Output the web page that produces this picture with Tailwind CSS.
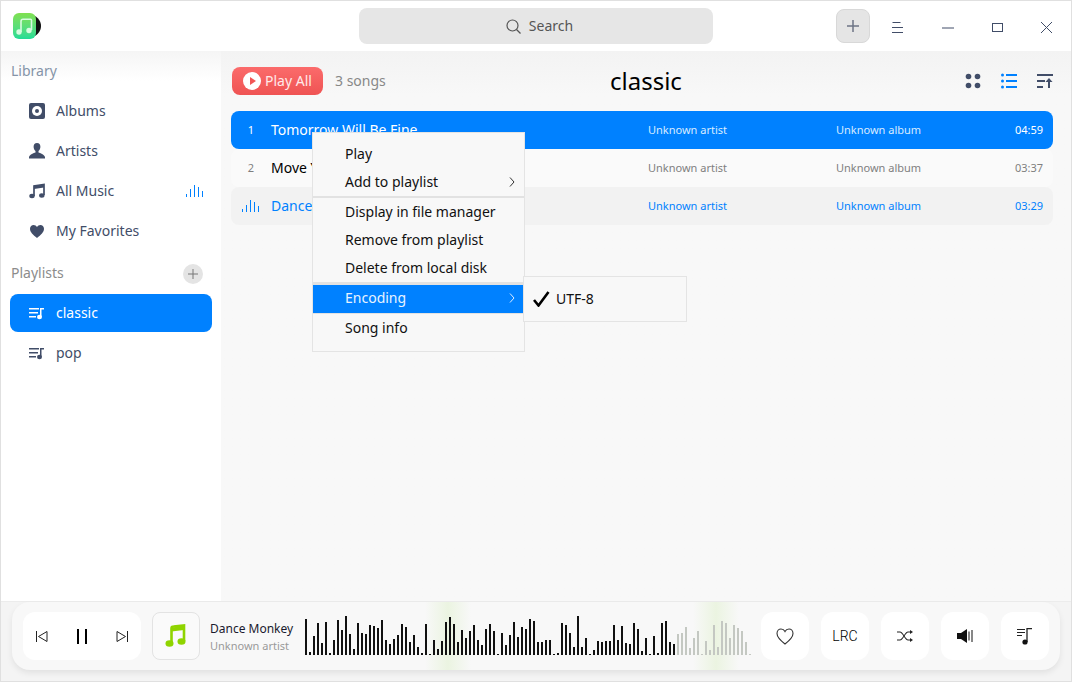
<!DOCTYPE html>
<html lang="en">
  <head>
    <meta charset="UTF-8" />
    <title>Music</title>
    <script src="https://cdn.jsdelivr.net/npm/@tailwindcss/browser@4"></script>
  </head>
  <body class="w-[1072px] h-[682px] overflow-hidden bg-white font-['Noto_Sans',sans-serif]">
    <div class="relative w-full h-full border border-[#e0e0e0] flex flex-col bg-[#f8f8f8]">
      <!-- title bar -->
      <header class="h-[50px] shrink-0 bg-white flex items-center relative z-10">
        <div class="ml-3 relative w-7 h-[26px]">
          <div class="absolute left-[12px] top-[2px] w-[16px] h-[22px] rounded-r-full bg-[#111]"></div>
          <div class="absolute left-0 top-0 w-[23px] h-[26px] rounded-[6px] bg-gradient-to-b from-[#7fe04f] to-[#1fdc96] flex items-center justify-center">
            <svg class="w-[17px] h-[17px]" viewBox="0 0 17 17" fill="none"><path d="M5 14V3.500C5 2 5.700 1.300 7 1.300h7.500c.7 0 1 .4 1 1V12" stroke="#d8fbe0" stroke-width="1.600"/><circle cx="3" cy="14" r="2.700" fill="#d8fbe0"/><circle cx="13" cy="12.500" r="2.700" fill="#d8fbe0"/></svg>
          </div>
        </div>
        <div class="absolute left-[358px] top-[7px] w-[354px] h-9 rounded-lg bg-[#e6e6e6] flex items-center justify-center gap-[7px] pl-[6px] text-sm text-[#555]">
          <svg class="w-[17px] h-[17px]" viewBox="0 0 17 17" fill="none" stroke="#555" stroke-width="1.200"><circle cx="7.500" cy="7.500" r="5.500"/><path d="M11.500 11.500l4 4"/></svg>
          <span>Search</span>
        </div>
        <div class="absolute left-[835px] top-[8px] w-[34px] h-[34px] rounded-lg bg-[#e5e5e5] border border-[#d8d8d8] flex items-center justify-center">
          <svg class="w-[14px] h-[14px]" viewBox="0 0 14 14" stroke="#6d7485" stroke-width="1.500"><path d="M7 1v12M1 7h12"/></svg>
        </div>
        <svg class="absolute left-[890px] top-[20px] w-[12px] h-[13px]" viewBox="0 0 12 13" stroke="#414d68"><path d="M1.500 1.500h8M1 6.500h11M1 11.500h11"/></svg>
        <svg class="absolute left-[941px] top-[26px] w-[12px] h-[2px]" viewBox="0 0 12 2" stroke="#414d68"><path d="M0 1h12"/></svg>
        <svg class="absolute left-[991px] top-[22px] w-[12px] h-[10px]" viewBox="0 0 12 10" fill="none" stroke="#414d68"><rect x=".5" y=".5" width="10" height="8"/></svg>
        <svg class="absolute left-[1039px] top-[20px] w-[13px] h-[13px]" viewBox="0 0 13 13" stroke="#414d68"><path d="M1 1l11 11M12 1L1 12"/></svg>
      </header>

      <div class="flex-1 flex min-h-0">
        <!-- sidebar -->
        <aside class="w-[220px] shrink-0 bg-white relative">
          <div class="absolute inset-x-0 top-0 h-[30px] bg-gradient-to-b from-[#f5f5f5] to-white"></div>
          <div class="relative">
            <div class="pl-[10px] pt-[10px] h-[40px] text-sm text-[#8594a8]">Library</div>
            <div class="h-10 flex items-center pl-[28px] gap-[11px] text-sm text-[#414d68]">
              <svg class="w-4 h-4" viewBox="0 0 16 16"><rect width="16" height="16" rx="2" fill="#414d68"/><circle cx="8" cy="8" r="5" fill="#fff"/><circle cx="8" cy="8" r="2" fill="#414d68"/></svg>
              <span>Albums</span>
            </div>
            <div class="h-10 flex items-center pl-[28px] gap-[11px] text-sm text-[#414d68]">
              <svg class="w-4 h-4" viewBox="0 0 16 16" fill="#414d68"><path d="M8 0c2.300 0 3.400 1.700 3.400 3.800 0 1.700-.8 3.300-1.900 4.200v1.500c1.800.7 5.500 1.800 6.500 4.500v1.500H0V14c1-2.700 4.700-3.800 6.500-4.500V8C5.400 7.100 4.600 5.500 4.600 3.800 4.600 1.700 5.700 0 8 0z"/></svg>
              <span>Artists</span>
            </div>
            <div class="relative h-10 flex items-center pl-[28px] gap-[11px] text-sm text-[#414d68]">
              <svg class="w-4 h-4" viewBox="0 0 16 16" fill="none"><path d="M5 13V3l10-1.500V12" stroke="#414d68" stroke-width="1.700"/><path d="M5 3l10-1.500v3L5 6z" fill="#414d68"/><ellipse cx="3" cy="13" rx="2.700" ry="2.200" fill="#414d68"/><ellipse cx="12.800" cy="12.500" rx="2.700" ry="2.200" fill="#414d68"/></svg>
              <span>All Music</span>
              <svg class="absolute left-[185px] top-[14px] w-[17px] h-[12px]" viewBox="0 0 17 12" fill="#0081ff" shape-rendering="crispEdges"><rect x="0" y="9" width="1" height="3"/><rect x="4" y="4" width="1" height="8"/><rect x="8" y="0" width="1" height="12"/><rect x="12" y="2" width="1" height="10"/><rect x="16" y="6" width="1" height="6"/></svg>
            </div>
            <div class="h-10 flex items-center pl-[28px] gap-[11px] text-sm text-[#414d68]">
              <svg class="w-4 h-4" viewBox="0 0 16 16" fill="#414d68"><path d="M8 15C4 11.800 1 9.200 1 5.800 1 3.500 2.700 2 4.600 2 6 2 7.300 2.800 8 4c.7-1.200 2-2 3.400-2C13.300 2 15 3.500 15 5.800c0 3.400-3 6-7 9.200z"/></svg>
              <span>My Favorites</span>
            </div>
            <div class="h-[43px] pl-[10px] pr-[18px] pt-[2px] flex items-center justify-between text-sm text-[#8c8c8c]">
              <span class="mb-[2px]">Playlists</span>
              <span class="w-5 h-5 rounded-full bg-[#e4e4e4] flex items-center justify-center">
                <svg class="w-[10px] h-[10px]" viewBox="0 0 10 10" stroke="#777"><path d="M5 0v10M0 5h10"/></svg>
              </span>
            </div>
            <div class="ml-[9px] w-[202px] h-[38px] rounded-lg bg-[#0081ff] flex items-center pl-[19px] gap-[11px] text-sm text-white">
              <svg class="w-4 h-[14px]" viewBox="0 0 16 14" fill="#fff"><path d="M0 2h10v1.500H0zM0 6h9v1.500H0zM0 10h7v1.500H0z"/><path d="M11 2h4v1.500h-2.500V11H11z"/><ellipse cx="10.500" cy="11" rx="2.500" ry="2.200"/></svg>
              <span>classic</span>
            </div>
            <div class="ml-[9px] w-[202px] h-[42px] flex items-center pl-[19px] gap-[11px] text-sm text-[#414d68]">
              <svg class="w-4 h-[14px]" viewBox="0 0 16 14" fill="#414d68"><path d="M0 2h10v1.500H0zM0 6h9v1.500H0zM0 10h7v1.500H0z"/><path d="M11 2h4v1.500h-2.500V11H11z"/><ellipse cx="10.500" cy="11" rx="2.500" ry="2.200"/></svg>
              <span>pop</span>
            </div>
          </div>
        </aside>

        <!-- main -->
        <main class="flex-1 min-w-0 relative bg-gradient-to-b from-[#f3f3f3] to-[#f8f8f8] to-[8%] pl-[10px] pr-[18px]">
          <div class="relative h-[60px] flex items-center">
            <div class="ml-px w-[91px] h-[28px] rounded-lg bg-gradient-to-b from-[#fb6b6b] to-[#ef5353] flex items-center pl-[11px] gap-[4px] text-sm text-[#ffe9e9]">
              <svg class="w-[18px] h-[18px]" viewBox="0 0 18 18"><circle cx="9" cy="9" r="9" fill="#fff"/><path d="M7 5l6 4-6 4z" fill="#f25656"/></svg>
              <span>Play All</span>
            </div>
            <span class="ml-[12px] text-sm text-[#888]">3 songs</span>
            <span class="absolute left-[379px] top-[13px] text-2xl leading-[34px] text-black">classic</span>
            <div class="absolute right-0 top-[22px] flex items-center gap-[20px]">
              <svg class="w-4 h-4" viewBox="0 0 16 16" fill="#414d68"><circle cx="3.500" cy="3.500" r="2.800"/><circle cx="12.500" cy="3.500" r="2.800"/><circle cx="3.500" cy="12.500" r="2.800"/><circle cx="12.500" cy="12.500" r="2.800"/></svg>
              <svg class="w-4 h-4" viewBox="0 0 16 16" fill="#0081ff"><circle cx="1.500" cy="2" r="1.500"/><circle cx="1.500" cy="8" r="1.500"/><circle cx="1.500" cy="14" r="1.500"/><rect x="5" y="1" width="11" height="2"/><rect x="5" y="7" width="11" height="2"/><rect x="5" y="13" width="11" height="2"/></svg>
              <svg class="w-4 h-4" viewBox="0 0 16 16" fill="#414d68"><rect y="1" width="16" height="2"/><rect y="7" width="8" height="2"/><rect y="13" width="6" height="2"/><path d="M12 5l3.500 4H13v6h-2V9H8.500z"/></svg>
            </div>
          </div>

          <div class="text-[11px]">
            <div class="h-[38px] rounded-lg bg-[#0081ff] flex items-center text-white">
              <span class="w-[40px] text-center">1</span>
              <span class="w-[377px] text-sm">Tomorrow Will Be Fine</span>
              <span class="w-[188px] text-[#d8ebff]">Unknown artist</span>
              <span class="flex-1 text-[#d8ebff]">Unknown album</span>
              <span class="mr-[10px]">04:59</span>
            </div>
            <div class="h-[38px] rounded-lg bg-[#fafafa] flex items-center text-[#7f7f7f]">
              <span class="w-[40px] text-center">2</span>
              <span class="w-[377px] text-sm text-black">Move Your Body</span>
              <span class="w-[188px]">Unknown artist</span>
              <span class="flex-1">Unknown album</span>
              <span class="mr-[10px]">03:37</span>
            </div>
            <div class="h-[38px] rounded-lg bg-[#f2f2f2] flex items-center text-[#0081ff]">
              <span class="w-[40px] pl-[11px] flex">
                <svg class="w-[17px] h-[12px]" viewBox="0 0 17 12" fill="#0081ff" shape-rendering="crispEdges"><rect x="0" y="9" width="1" height="3"/><rect x="4" y="5" width="1" height="7"/><rect x="8" y="0" width="1" height="12"/><rect x="12" y="2" width="1" height="10"/><rect x="16" y="6" width="1" height="6"/></svg>
              </span>
              <span class="w-[377px] text-sm">Dance Monkey</span>
              <span class="w-[188px]">Unknown artist</span>
              <span class="flex-1">Unknown album</span>
              <span class="mr-[10px]">03:29</span>
            </div>
          </div>
        </main>
      </div>

      <!-- player -->
      <footer class="h-[80px] shrink-0 bg-[#f4f4f4] border-t border-[#ececec] px-[11px]">
        <div class="h-[68px] rounded-[18px] bg-[#f8f8f8] shadow-[0_3px_6px_rgba(0,0,0,0.08)] flex items-center pl-[11px] pr-[11px]">
          <div class="w-[118px] h-12 rounded-xl bg-white flex items-center justify-between px-[11px]">
            <svg class="w-[13px] h-[13px] ml-px" viewBox="0 0 13 13" fill="none" stroke="#222"><path d="M1.500 1v11M12 1.500v10L3.500 6.500z"/></svg>
            <svg class="w-3 h-[15px]" viewBox="0 0 12 15" fill="#000"><rect x="1" width="2" height="15"/><rect x="9" width="2" height="15"/></svg>
            <svg class="w-[13px] h-[13px] mr-px" viewBox="0 0 13 13" fill="none" stroke="#222"><path d="M11.500 1v11M1 1.500v10l8.500-5z"/></svg>
          </div>
          <div class="ml-[11px] w-12 h-12 rounded-lg border border-[#e3e3e3] bg-[#fafafa] flex items-center justify-center">
            <svg class="w-[22px] h-[24px]" viewBox="0 0 22 24" fill="none"><path d="M6.500 19V4.500C6.500 3 7.300 2.500 8.500 2.500L19 1.500V17" stroke="#8fd400" stroke-width="2.600"/><path d="M6.500 3.500L19 2v4L6.500 7.500z" fill="#8fd400"/><ellipse cx="4.500" cy="19.500" rx="4" ry="3.300" fill="#8fd400"/><ellipse cx="16.500" cy="17.500" rx="4" ry="3.300" fill="#8fd400"/></svg>
          </div>
          <div class="ml-[10px] w-[95px] shrink-0">
            <div class="text-xs leading-[19px] text-[#1a1a2e]">Dance Monkey</div>
            <div class="text-[11px] leading-[15px] text-[#9a9a9a]">Unknown artist</div>
          </div>
          <div class="relative w-[446px] h-[68px] shrink-0">
            <div class="absolute left-[120px] top-0 w-[46px] h-full bg-gradient-to-r from-transparent via-[#ebf4e1] to-transparent"></div>
            <div class="absolute left-[388px] top-0 w-[46px] h-full bg-gradient-to-r from-transparent via-[#ebf4e1] to-transparent"></div>
            <div id="wave" class="absolute left-0 bottom-[15px] flex items-end gap-[2px]"></div>
          </div>
          <div class="ml-[10px] w-12 h-12 rounded-xl bg-white flex items-center justify-center">
            <svg class="w-[18px] h-[17px]" viewBox="0 0 18 17" fill="none" stroke="#333" stroke-width="1.100"><path d="M9 16C4.500 12.500 1 9.500 1 5.500 1 2.800 3 1 5 1c1.700 0 3.200 1 4 2.500C9.800 2 11.300 1 13 1c2 0 4 1.800 4 4.500 0 4-3.500 7-8 10.500z"/></svg>
          </div>
          <div class="ml-3 w-12 h-12 rounded-xl bg-white flex items-center justify-center text-[14px] font-light text-black font-['Roboto',sans-serif]">LRC</div>
          <div class="ml-3 w-12 h-12 rounded-xl bg-white flex items-center justify-center">
            <svg class="w-4 h-[14px]" viewBox="0 0 16 14" fill="none" stroke="#222" stroke-width="1.100"><path d="M0 3h3c3 0 5 8 8 8h3M0 11h3c3 0 5-8 8-8h3"/><path d="M13 1l3 2-3 2zM13 9l3 2-3 2z" fill="#222" stroke="none"/></svg>
          </div>
          <div class="ml-3 w-12 h-12 rounded-xl bg-white flex items-center justify-center">
            <svg class="w-4 h-[14px]" viewBox="0 0 16 14" fill="#111"><path d="M0 4h4l6-4v14l-6-4H0z"/><rect x="11.500" y="2.500" width="1" height="9"/><rect x="14.500" y="1" width="1" height="12"/></svg>
          </div>
          <div class="ml-3 w-12 h-12 rounded-xl bg-white flex items-center justify-center">
            <svg class="w-[16px] h-[17px]" viewBox="0 0 16 17" fill="none"><path d="M0 1.500h8M0 4.500h8M0 7.500h5" stroke="#222"/><path d="M10 14V.7h5" stroke="#222" stroke-width="1.300"/><circle cx="8" cy="14" r="2.600" fill="#111"/></svg>
          </div>
        </div>
      </footer>

      <!-- context menu -->
      <div class="absolute left-[311px] top-[131px] w-[213px] h-[220px] bg-[#f8f8f8] border border-[#e4e4e4] pt-[7px] text-sm text-[#111] z-20">
        <div class="h-7 pl-8 flex items-center">Play</div>
        <div class="h-7 pl-8 pr-[9px] flex items-center justify-between">
          <span>Add to playlist</span>
          <svg class="w-[6px] h-[10px]" viewBox="0 0 6 10" fill="none" stroke="#333"><path d="M1 .5L5 5 1 9.500"/></svg>
        </div>
        <div class="h-[2px] bg-[#e2e2e2]"></div>
        <div class="h-7 pl-8 flex items-center">Display in file manager</div>
        <div class="h-7 pl-8 flex items-center">Remove from playlist</div>
        <div class="h-7 pl-8 flex items-center">Delete from local disk</div>
        <div class="h-[3px] bg-[#e2e2e2]"></div>
        <div class="h-7 pl-8 pr-[8px] pb-[2px] flex items-center justify-between bg-[#0081ff] text-[#e8f3ff] w-[210px]">
          <span>Encoding</span>
          <svg class="w-[6px] h-[10px]" viewBox="0 0 6 10" fill="none" stroke="#dcecff"><path d="M1 .5L5 5 1 9.500"/></svg>
        </div>
        <div class="h-px bg-[#e2e2e2]"></div>
        <div class="h-7 pl-8 flex items-center">Song info</div>
      </div>
      <!-- encoding submenu -->
      <div class="absolute left-[522px] top-[275px] w-[164px] h-[46px] bg-[#f8f8f8] border border-[#e4e4e4] flex items-center pl-[9px] gap-[6px] text-sm text-[#111] z-30">
        <svg class="w-[17px] h-[16px]" viewBox="0 0 17 16" fill="none" stroke="#000" stroke-width="2.600"><path d="M1 9l4.500 5.500L15.500 1"/></svg>
        <span>UTF-8</span>
      </div>
    </div>
    <script>
      // bar heights read off the waveform, the last ones are the part not played yet
      const heights = [36,3,19,32,12,33,2,15,35,25,39,21,6,32,22,21,30,29,27,35,15,11,16,20,31,28,13,20,8,2,31,1,15,6,14,33,38,31,13,25,17,24,30,15,10,26,31,24,1,22,10,20,33,18,28,26,36,34,13,13,15,15,1,2,32,30,22,8,39,8,17,1,5,14,13,14,14,30,15,29,12,11,32,26,4,17,1,19,2,32,34,13,11,21,22,28,7,17,24,1,14,5,30,8,34,32,17,30,27,24,13,1];
      const wave = document.getElementById('wave');
      heights.forEach((h, i) => {
        const bar = document.createElement('i');
        bar.className = i < 93 ? 'block w-[2px] bg-[#111]' : 'block w-[2px] bg-[#c4c8c2]';
        bar.style.height = h + 'px';
        wave.appendChild(bar);
      });
    </script>
  </body>
</html>
